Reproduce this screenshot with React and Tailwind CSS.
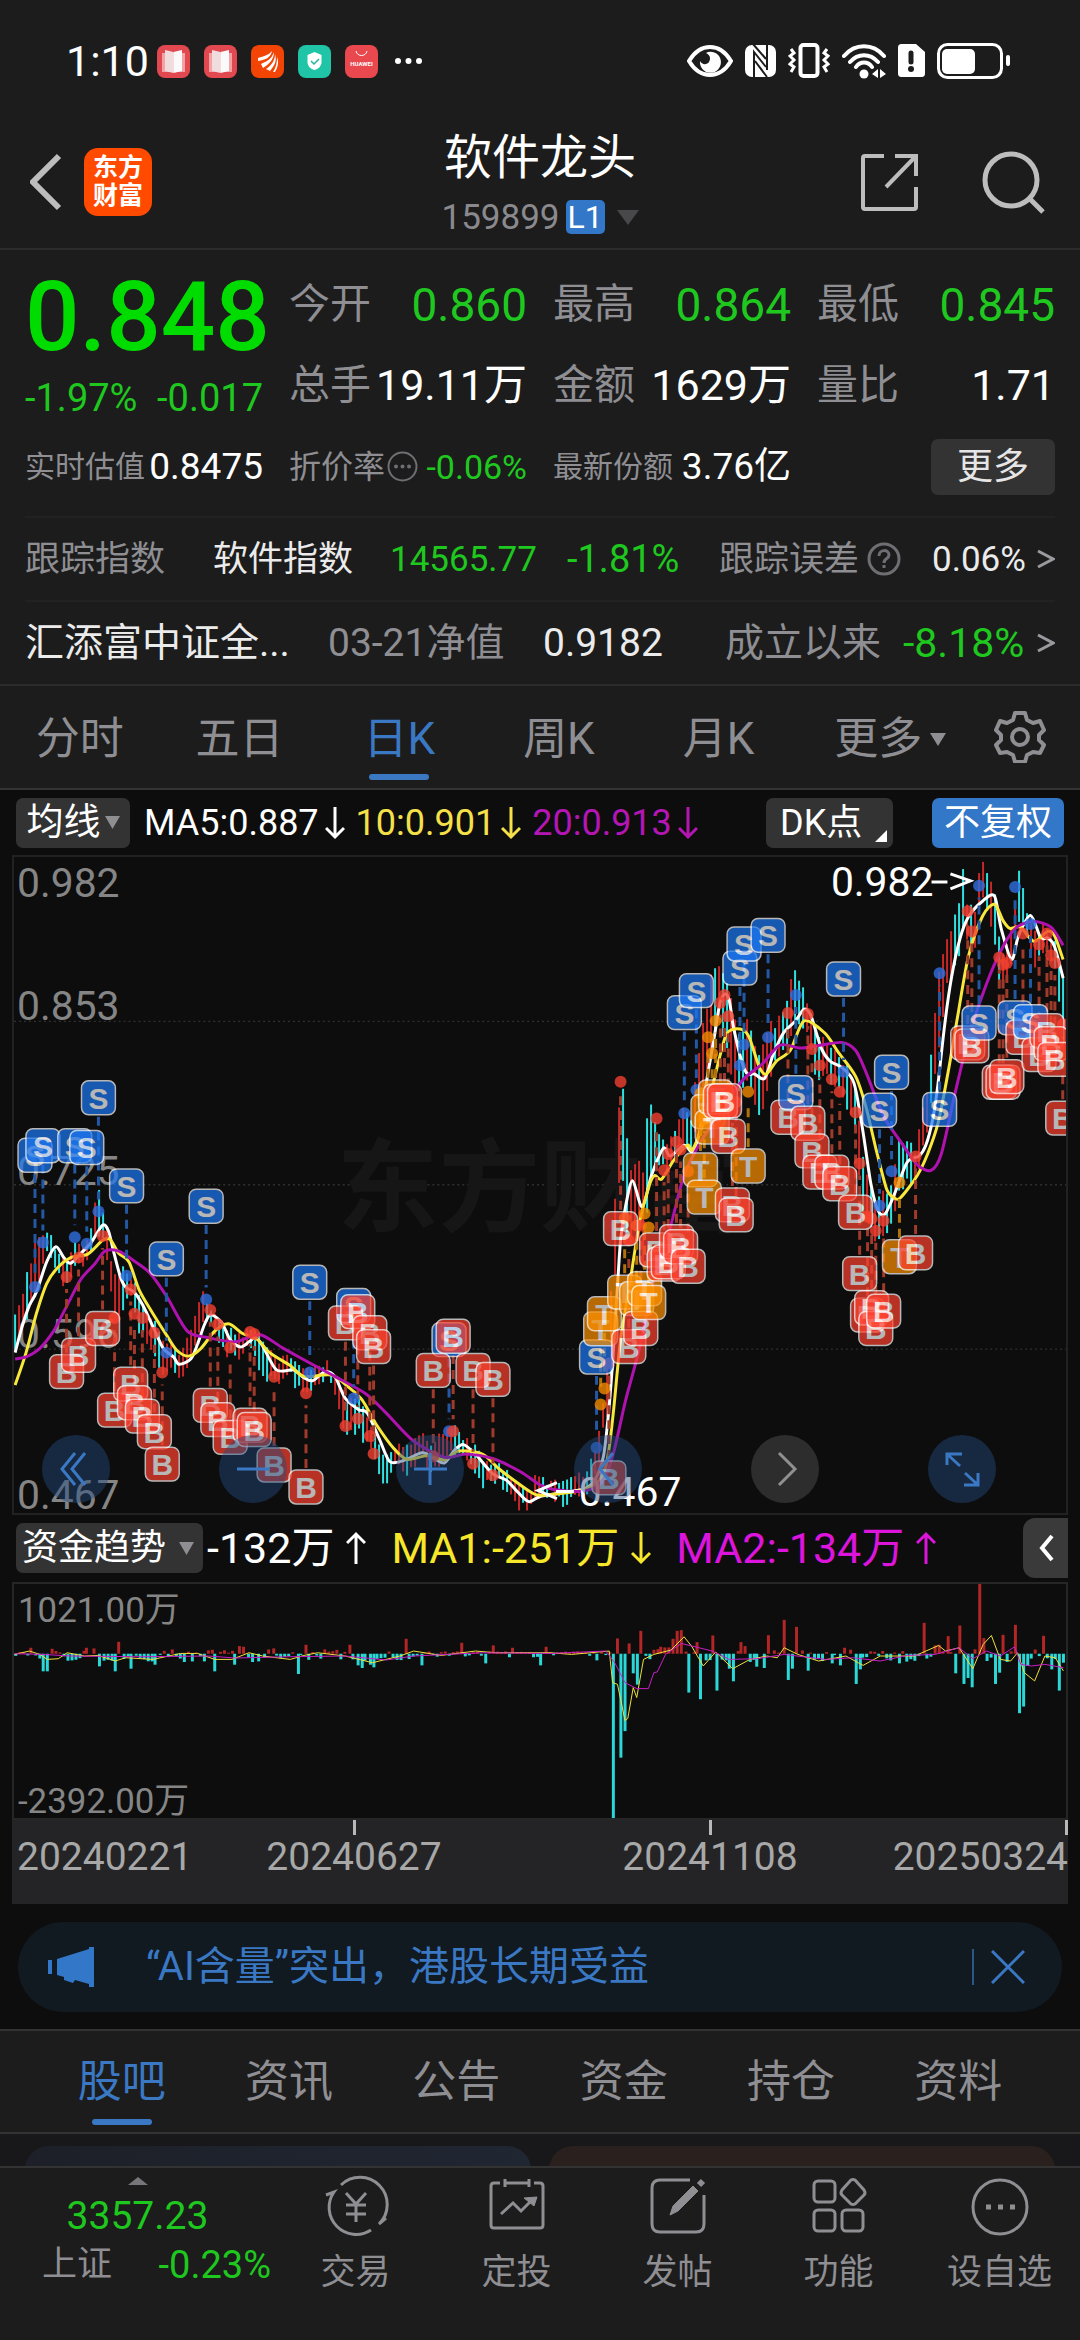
import React from "react";

/* ---------- chart data ---------- */
const UX = 2.904;
const UY = 2.306;
const HALF = 1568;
const px = (u) => u / UX - 12;
const py = (v) => v / UY - 5.5;

const pairs = (left, right) => {
  const out = [];
  for (let i = 0; i < left.length; i += 2) out.push([px(left[i]), py(left[i + 1])]);
  for (let i = 0; i < right.length; i += 2) out.push([px(right[i] + HALF), py(right[i + 1])]);
  return out;
};

const smooth = (p) => {
  let d = `M${p[0][0].toFixed(1)} ${p[0][1].toFixed(1)}`;
  for (let i = 0; i < p.length - 1; i++) {
    const a = p[Math.max(i - 1, 0)];
    const b = p[i];
    const c = p[i + 1];
    const e = p[Math.min(i + 2, p.length - 1)];
    d += `C${(b[0] + (c[0] - a[0]) / 7).toFixed(1)} ${(b[1] + (c[1] - a[1]) / 7).toFixed(1)} ${(c[0] - (e[0] - b[0]) / 7).toFixed(1)} ${(c[1] - (e[1] - b[1]) / 7).toFixed(1)} ${c[0].toFixed(1)} ${c[1].toFixed(1)}`;
  }
  return d;
};

const ma5 = pairs(
  [38, 1160, 60, 1095, 80, 1050, 100, 1020, 130, 950, 157, 915, 180, 940, 200, 953, 230, 930, 260, 905, 293, 865, 310, 878, 325, 925, 345, 985, 360, 1008, 385, 1020, 410, 1050, 440, 1100, 470, 1150, 500, 1170, 516, 1187, 550, 1175, 570, 1140, 590, 1095, 608, 1072, 640, 1090, 665, 1130, 695, 1147, 720, 1135, 740, 1125, 760, 1145, 800, 1200, 850, 1200, 880, 1218, 905, 1225, 940, 1205, 970, 1215, 1000, 1265, 1040, 1292, 1065, 1300, 1100, 1360, 1130, 1412, 1170, 1410, 1225, 1392, 1260, 1405, 1290, 1415, 1320, 1385, 1345, 1373, 1380, 1395, 1430, 1440, 1470, 1455, 1500, 1480, 1535, 1505],
  [0, 1493, 60, 1485, 130, 1475, 160, 1455, 185, 1400, 200, 1300, 212, 1180, 225, 1020, 235, 900, 250, 820, 270, 762, 298, 823, 325, 750, 360, 687, 380, 705, 420, 680, 445, 695, 465, 650, 480, 560, 497, 480, 510, 420, 525, 350, 540, 330, 552, 345, 565, 410, 590, 490, 605, 515, 625, 515, 655, 525, 680, 470, 710, 420, 745, 392, 770, 365, 790, 380, 820, 455, 845, 485, 880, 500, 915, 535, 940, 640, 965, 770, 985, 830, 1005, 840, 1030, 800, 1070, 720, 1105, 705, 1125, 680, 1145, 620, 1160, 540, 1180, 400, 1200, 290, 1225, 200, 1250, 150, 1290, 115, 1325, 103, 1345, 180, 1375, 250, 1395, 195, 1430, 148, 1460, 200, 1480, 200, 1500, 220, 1525, 293]
);
const ma10 = pairs(
  [38, 1235, 70, 1160, 100, 1070, 130, 1000, 160, 965, 200, 940, 250, 932, 293, 900, 315, 898, 340, 930, 370, 950, 400, 1015, 440, 1070, 480, 1120, 510, 1155, 545, 1168, 580, 1150, 620, 1110, 660, 1093, 700, 1115, 745, 1130, 780, 1160, 840, 1190, 880, 1215, 960, 1212, 1010, 1240, 1050, 1270, 1090, 1325, 1140, 1380, 1180, 1407, 1240, 1398, 1290, 1408, 1330, 1388, 1400, 1395, 1450, 1430, 1500, 1460, 1540, 1482],
  [0, 1490, 100, 1482, 150, 1470, 185, 1440, 200, 1390, 215, 1290, 235, 1130, 260, 1010, 290, 860, 320, 770, 335, 750, 355, 758, 390, 715, 430, 680, 445, 690, 480, 620, 510, 520, 540, 430, 560, 412, 590, 412, 610, 430, 640, 500, 660, 515, 690, 485, 730, 460, 770, 392, 830, 420, 870, 465, 920, 520, 950, 590, 980, 690, 1010, 780, 1030, 800, 1050, 802, 1100, 750, 1130, 700, 1160, 630, 1190, 510, 1220, 370, 1250, 240, 1290, 150, 1325, 122, 1350, 160, 1370, 178, 1400, 175, 1440, 208, 1480, 185, 1500, 195, 1525, 250]
);
const ma20 = pairs(
  [38, 1175, 70, 1170, 110, 1150, 150, 1110, 190, 1050, 230, 990, 270, 955, 300, 925, 340, 925, 380, 945, 430, 975, 480, 1030, 540, 1110, 600, 1125, 680, 1135, 750, 1118, 820, 1150, 900, 1185, 970, 1215, 1060, 1255, 1120, 1300, 1200, 1365, 1290, 1402, 1350, 1395, 1430, 1405, 1510, 1435],
  [0, 1466, 40, 1477, 130, 1480, 185, 1455, 215, 1390, 250, 1270, 290, 1150, 330, 1000, 380, 870, 420, 750, 470, 670, 530, 600, 590, 530, 650, 490, 700, 448, 760, 455, 820, 448, 880, 442, 920, 460, 950, 510, 1000, 610, 1050, 670, 1100, 725, 1140, 738, 1170, 700, 1210, 560, 1250, 430, 1300, 310, 1350, 220, 1390, 175, 1440, 162, 1490, 175, 1525, 217]
);

// x, high, low
const rangeLeft = [38, 1065, 1160, 60, 1025, 1090, 95, 905, 1050, 130, 867, 930, 160, 920, 980, 190, 940, 1010, 210, 895, 950, 235, 920, 975, 260, 870, 920, 281, 775, 880, 300, 850, 920, 328, 985, 1080, 350, 960, 1060, 375, 975, 1030, 400, 1030, 1110, 440, 1080, 1150, 467, 1130, 1220, 490, 1140, 1180, 515, 1165, 1225, 540, 1130, 1190, 560, 1090, 1165, 583, 1020, 1100, 610, 1050, 1100, 650, 1100, 1160, 690, 1120, 1180, 725, 1100, 1140, 760, 1130, 1220, 800, 1180, 1225, 840, 1170, 1215, 885, 1200, 1270, 950, 1180, 1215, 1000, 1260, 1345, 1040, 1260, 1340, 1080, 1330, 1400, 1115, 1395, 1465, 1150, 1370, 1420, 1190, 1380, 1440, 1225, 1340, 1400, 1257, 1370, 1440, 1310, 1325, 1400, 1345, 1350, 1400, 1400, 1400, 1465, 1450, 1420, 1460, 1500, 1465, 1515, 1535, 1480, 1525, 1560, 1440, 1500];
const rangeRight = [30, 1460, 1490, 75, 1460, 1515, 130, 1440, 1490, 165, 1385, 1450, 180, 1290, 1360, 200, 1170, 1290, 212, 920, 1120, 235, 510, 680, 247, 580, 820, 260, 740, 940, 282, 710, 850, 300, 740, 960, 317, 570, 780, 328, 600, 750, 345, 650, 720, 370, 680, 740, 397, 635, 710, 420, 575, 700, 440, 630, 690, 455, 520, 650, 467, 435, 600, 480, 390, 600, 503, 270, 440, 514, 260, 400, 535, 270, 430, 550, 320, 470, 562, 350, 530, 580, 420, 560, 605, 390, 520, 630, 450, 600, 642, 480, 630, 665, 400, 550, 690, 400, 470, 722, 330, 460, 745, 270, 400, 780, 350, 420, 805, 410, 520, 850, 460, 530, 880, 480, 560, 920, 530, 640, 932, 640, 780, 945, 730, 850, 978, 800, 900, 1003, 790, 890, 1015, 800, 900, 1048, 660, 780, 1095, 690, 760, 1108, 630, 720, 1130, 550, 650, 1150, 375, 530, 1165, 260, 440, 1190, 200, 300, 1220, 120, 240, 1233, 40, 190, 1245, 110, 200, 1270, 150, 230, 1280, 50, 130, 1292, 15, 100, 1325, 95, 210, 1338, 190, 330, 1350, 230, 330, 1375, 180, 250, 1397, 40, 160, 1420, 130, 210, 1443, 190, 270, 1475, 170, 220, 1500, 210, 270, 1525, 290, 400];

const noise = (n) => {
  const s = Math.sin(n * 127.1 + 11.7) * 43758.5453;
  return s - Math.floor(s);
};

const candles = (() => {
  const keys = [];
  for (let i = 0; i < rangeLeft.length; i += 3) keys.push([rangeLeft[i], rangeLeft[i + 1], rangeLeft[i + 2]]);
  for (let i = 0; i < rangeRight.length; i += 3) keys.push([rangeRight[i] + HALF, rangeRight[i + 1], rangeRight[i + 2]]);
  const out = [];
  let k = 0;
  let n = 0;
  for (let x = 38; x <= 3093; x += 11.66, n++) {
    while (k < keys.length - 2 && x > keys[k + 1][0]) k++;
    const [x0, h0, l0] = keys[k];
    const [x1, h1, l1] = keys[k + 1];
    const t = Math.min(Math.max((x - x0) / (x1 - x0), 0), 1);
    const falling = h1 + l1 > h0 + l0;
    const hi = h0 + (h1 - h0) * t + (noise(n) - 0.4) * 22;
    const lo = l0 + (l1 - l0) * t - (noise(n + 500) - 0.4) * 26;
    out.push({
      x: px(x),
      y0: Math.max(py(hi), 1),
      y1: Math.min(py(Math.max(lo, hi + 14)), 656),
      up: noise(n + 900) > (falling ? 0.68 : 0.28),
    });
  }
  return out;
})();

// kind, x, badge y, dot y
const marksLeft = [
  ["S", 96, 703, 1008], ["S", 119, 681, 905], ["S", 212, 681, 893], ["S", 247, 685, 908], ["S", 281, 570, 833], ["S", 363, 774, 982],
  ["S", 479, 943, 1160], ["S", 595, 821, 1037], ["S", 897, 997, 1206], ["S", 1025, 1051, 1266], ["S", 1303, 1130, 1342],
  ["B", 188, 1204, 985], ["B", 223, 1166, 940], ["B", 293, 1104, 890], ["B", 328, 1293, 1080], ["B", 375, 1233, 1014], ["B", 386, 1276, 1070],
  ["B", 409, 1307, 1080], ["B", 444, 1343, 1114], ["B", 467, 1418, 1206], ["B", 607, 1282, 1061], ["B", 629, 1315, 1095], ["B", 665, 1356, 1148],
  ["B", 723, 1328, 1112], ["B", 735, 1338, 1117], ["B", 793, 1420, 1216], ["B", 886, 1471, 1254], ["B", 1001, 1091, 1330], ["B", 1037, 1065, 1313],
  ["B", 1072, 1114, 1353], ["B", 1083, 1146, 1394], ["B", 1257, 1201, 1400], ["B", 1315, 1122, 1342], ["B", 1373, 1201, 1417], ["B", 1431, 1222, 1444],
];
const marksRight = [
  ["S", 165, 1170, 1380], ["T", 177, 1105, 1280], ["T", 188, 1070, 1243], ["B", 201, 1450, 1185], ["B", 235, 873, 533], ["T", 247, 1020, 848],
  ["B", 259, 1146, 900], ["T", 282, 1035, 866], ["B", 294, 1104, 866], ["T", 305, 1012, 838], ["T", 317, 1044, 870], ["B", 340, 922, 618],
  ["B", 362, 955, 738], ["B", 374, 950, 700], ["B", 398, 903, 672], ["B", 410, 915, 690], ["B", 432, 960, 740], ["S", 421, 373, 606],
  ["S", 456, 322, 552], ["T", 468, 737, 560], ["T", 479, 800, 620], ["T", 490, 602, 430], ["T", 502, 638, 467], ["T", 512, 568, 392], ["B", 526, 578, 350],
  ["B", 538, 577, 332], ["B", 549, 659, 381], ["B", 561, 818, 600], ["B", 572, 841, 580], ["S", 583, 270, 495], ["S", 595, 214, 447],
  ["T", 607, 728, 556], ["S", 665, 194, 430], ["B", 723, 615, 374], ["S", 746, 558, 332], ["B", 781, 629, 376], ["B", 793, 693, 457],
  ["B", 816, 742, 495], ["B", 851, 742, 527], ["B", 874, 769, 556], ["S", 885, 295, 510], ["B", 920, 835, 604], ["B", 932, 977, 722],
  ["B", 955, 1073, 845], ["B", 967, 1056, 850], ["B", 979, 1104, 878], ["S", 990, 599, 820], ["B", 1002, 1064, 855], ["S", 1025, 511, 740],
  ["T", 1048, 938, 766], ["B", 1095, 929, 706], ["S", 1165, 597, 282], ["B", 1247, 443, 138], ["B", 1259, 450, 185], ["S", 1280, 397, 79],
  ["B", 1339, 534, 245], ["B", 1350, 534, 262], ["B", 1361, 521, 258], ["S", 1385, 385, 82], ["B", 1408, 430, 190], ["S", 1430, 394, 168],
  ["B", 1455, 470, 215], ["B", 1478, 415, 190], ["B", 1490, 445, 240], ["B", 1501, 481, 258], ["B", 1524, 617, 400],
];
const marks = [...marksLeft, ...marksRight.map(([k, x, y, d]) => [k, x + HALF, y, d])].map(([kind, x, y, dot]) => ({
  kind,
  x: px(x),
  y: py(y),
  dot: py(dot),
}));

const badgeFill = { S: "#1c78f5", B: "#ff4230", T: "#ff9100" };
const dotFill = { S: "#2e6fe0", B: "#f04030", T: "#f08a00" };
const dashFill = { S: "#2358a4", B: "#a03a2a", T: "#b0720a" };

/* ---------- fund-flow data ---------- */
const fx = (u) => u / 1.452 - 12;
const fy = (v) => v / 3 - 71;
const ZERO = fy(423);
const bigFlows = [42, 405, 73, 408, 123, 405, 134, 407, 170, 387, 346, 400, 352, 402, 396, 407, 443, 396, 507, 396, 589, 378, 670, 390, 716, 398, 744, 405, 793, 402, 897, 377, 914, 392, 931, 354, 960, 402, 966, 404, 972, 404, 978, 378, 984, 354, 990, 352, 1013, 388, 1036, 368, 1077, 388, 1083, 400, 1117, 367, 1140, 321, 1158, 342, 1228, 405, 1344, 330, 1360, 398, 1366, 396, 1379, 370, 1396, 338, 1425, 212, 1431, 376, 1459, 366, 1477, 336, 1518, 369, 60, 476, 66, 476, 102, 443, 142, 461, 165, 476, 188, 468, 223, 456, 310, 476, 339, 456, 374, 446, 432, 484, 519, 458, 525, 466, 537, 456, 542, 464, 612, 458, 705, 452, 785, 458, 867, 443, 891, 918, 902, 736, 908, 656, 920, 482, 926, 516, 1001, 540, 1018, 560, 1042, 534, 1060, 468, 1066, 506, 1100, 462, 1111, 466, 1146, 502, 1152, 468, 1175, 474, 1210, 452, 1222, 458, 1245, 514, 1251, 470, 1308, 452, 1390, 482, 1402, 514, 1408, 496, 1414, 524, 1448, 514, 1454, 480, 1483, 602, 1489, 582, 1495, 460, 1530, 470, 1541, 534, 1547, 450];
const flows = (() => {
  const out = [];
  for (let i = 0; i < bigFlows.length; i += 2) out.push([fx(bigFlows[i]), fy(bigFlows[i + 1])]);
  let n = 0;
  for (let x = 20; x < 1548; x += 5.85, n++) {
    if (bigFlows.some((v, i) => i % 2 === 0 && Math.abs(v - x) < 3)) continue;
    const quiet = (x > 620 && x < 885) || x < 50;
    const amp = quiet ? 8 : 22;
    const up = noise(n + 40) > (quiet ? 0.35 : 0.62);
    out.push([fx(x), fy(423 + (up ? -1 : 1) * (3 + noise(n + 70) * (up ? amp / 2 : amp)))]);
  }
  return out;
})();
const flowLine = (a) => {
  let d = "";
  for (let i = 0; i < a.length; i += 2) d += `${i ? "L" : "M"}${fx(a[i]).toFixed(1)} ${fy(a[i + 1]).toFixed(1)}`;
  return d;
};
const flowMa1 = [18, 425, 40, 415, 55, 425, 66, 440, 82, 438, 95, 420, 120, 430, 140, 428, 165, 445, 180, 435, 220, 440, 260, 422, 285, 422, 310, 440, 335, 440, 360, 420, 380, 430, 420, 440, 440, 428, 460, 420, 500, 430, 540, 450, 580, 430, 600, 415, 640, 428, 690, 415, 720, 420, 800, 420, 830, 425, 885, 415, 890, 510, 897, 515, 908, 624, 912, 618, 920, 525, 925, 555, 935, 440, 950, 425, 975, 412, 994, 372, 1005, 400, 1022, 460, 1040, 418, 1065, 468, 1090, 440, 1115, 430, 1130, 435, 1140, 405, 1160, 425, 1190, 445, 1230, 430, 1255, 458, 1280, 430, 1330, 430, 1365, 398, 1375, 415, 1395, 405, 1415, 468, 1430, 395, 1442, 368, 1455, 440, 1470, 445, 1480, 420, 1490, 480, 1505, 505, 1520, 430, 1535, 435, 1547, 475];
const flowMa2 = [18, 423, 60, 425, 100, 430, 200, 432, 300, 430, 340, 436, 420, 432, 500, 430, 560, 442, 600, 430, 700, 420, 800, 422, 880, 415, 893, 450, 908, 510, 925, 528, 942, 528, 950, 480, 955, 478, 967, 425, 990, 392, 1010, 402, 1035, 415, 1060, 440, 1100, 438, 1140, 425, 1200, 440, 1240, 435, 1280, 445, 1320, 428, 1360, 425, 1395, 405, 1415, 438, 1435, 415, 1455, 430, 1476, 402, 1485, 455, 1500, 460, 1520, 455, 1547, 465];

/* ---------- small drawings ---------- */
const Arrow = ({ up }) => (
  <svg className="h-[34px] w-[20px] shrink-0" viewBox="0 0 20 34" fill="none" stroke="currentColor" strokeWidth="3">
    {up ? <path d="M10 33V3M1 12l9-9 9 9" /> : <path d="M10 1v30M1 22l9 9 9-9" />}
  </svg>
);
const Caret = ({ className }) => (
  <svg className={className} viewBox="0 0 16 13" fill="currentColor" preserveAspectRatio="none">
    <path d="M0 0h16L8 13z" />
  </svg>
);

function StatusBar() {
  const book = (
    <svg className="size-[33px]" viewBox="0 0 33 33">
      <rect width="33" height="33" rx="8" fill="#e2484f" />
      <path d="M5 8h23v19H5z" fill="#f3a3a6" />
      <path d="M8 5l8.500 2v21L8 26z" fill="#f0dcdc" />
      <path d="M25 5l-8.500 2v21l8.500-2z" fill="#fafafa" />
    </svg>
  );
  return (
    <div className="flex h-[122px] items-center justify-between pl-[66px] pr-[70px]">
      <div className="flex items-center gap-[14px]">
        <span className="w-[77px] text-[43px] leading-none text-white">1:10</span>
        {book}
        {book}
        <svg className="size-[33px]" viewBox="0 0 33 33">
          <rect width="33" height="33" rx="8" fill="#f24405" />
          <path d="M7 13c6-2 11-3 14-7-1 6-6 9-14 10zM10 19c7-3 11-6 13-12 0 8-5 12-11 16zM15 24c6-4 9-9 9-15 2 7 0 11-5 17zM22 27c3-5 4-9 4-15 2 5 1 10-2 15z" fill="#fff" />
        </svg>
        <svg className="size-[33px]" viewBox="0 0 33 33">
          <rect width="33" height="33" rx="8" fill="#20c4a6" />
          <path d="M16.500 7l7 3v7c0 4-3 7-7 8-4-1-7-4-7-8v-7z" fill="#fff" />
          <path d="M13 16l3 3 5-5" fill="none" stroke="#20b79b" strokeWidth="1.500" />
        </svg>
        <svg className="size-[33px]" viewBox="0 0 33 33">
          <rect width="33" height="33" rx="8" fill="#e8484e" />
          <path d="M11 6c1 6 10 6 11 0" fill="none" stroke="#fff" />
          <text x="16.500" y="21" textAnchor="middle" fontSize="6" fontWeight="700" fill="#fff">HUAWEI</text>
        </svg>
        <svg className="ml-[3px] h-[6px] w-[27px]" viewBox="0 0 27 6" fill="#fff">
          <circle cx="3" cy="3" r="3" />
          <circle cx="13.500" cy="3" r="3" />
          <circle cx="24" cy="3" r="3" />
        </svg>
      </div>
      <div className="flex items-center gap-[12px]">
        <svg className="h-[36px] w-[46px]" viewBox="0 0 46 36">
          <path d="M2 18C8 8 15 4 23 4s15 4 21 14c-6 10-13 14-21 14S8 28 2 18z" fill="none" stroke="#fff" strokeWidth="4" />
          <path d="M21 9a10.500 10.500 0 1 1-8 9c2 4 7 4 9 1 2-4 1-7-3-9z" fill="#fff" />
        </svg>
        <svg className="h-[36px] w-[31px]" viewBox="0 0 31 36">
          <rect y="2" width="31" height="32" rx="7" fill="#fff" />
          <path d="M9 35V9l12 15M10 17v0M22 1v26M10 18l12 16M8 1l13 15" stroke="#1c1c1c" strokeWidth="2" fill="none" />
        </svg>
        <svg className="h-[36px] w-[42px]" viewBox="0 0 42 36" fill="none" stroke="#fff" strokeWidth="3">
          <rect x="12.500" y="2" width="17" height="31" rx="3" strokeWidth="4" />
          <path d="M3 6l3 4-4 3 4 4-4 4 4 3-3 5M39 6l-3 4 4 3-4 4 4 4-4 3 3 5" />
        </svg>
        <svg className="h-[36px] w-[44px]" viewBox="0 0 44 36" fill="none" stroke="#fff" strokeWidth="4">
          <path d="M2 13c11-13 29-13 40 0M8 19c8-9 20-9 28 0M14 24c4-6 12-6 16 0" strokeLinecap="round" />
          <circle cx="22" cy="31" r="4.500" fill="#fff" stroke="none" />
          <path d="M36 26v9l-6-4zM38 26v9l6-4z" fill="#fff" stroke="none" />
        </svg>
        <svg className="h-[36px] w-[27px]" viewBox="0 0 27 36">
          <path d="M4 1h14l9 8v21c0 3-1 4-4 4H4c-3 0-4-1-4-4V5c0-3 1-4 4-4z" fill="#fff" />
          <path d="M13 10v9" stroke="#1c1c1c" strokeWidth="5" strokeLinecap="round" />
          <circle cx="13" cy="26" r="3" fill="#1c1c1c" />
        </svg>
        <svg className="h-[36px] w-[73px]" viewBox="0 0 73 36">
          <rect x="1.500" y="1.500" width="63" height="33" rx="9" fill="none" stroke="#fff" strokeWidth="3" />
          <rect x="5" y="6" width="33" height="25" rx="5" fill="#fff" />
          <rect x="69" y="12" width="4" height="11" rx="2" fill="#fff" />
        </svg>
      </div>
    </div>
  );
}

function Header() {
  return (
    <header className="grid h-[128px] grid-cols-[1fr_auto_1fr] items-center border-b-2 border-[#2c2c2c] px-[30px]">
      <div className="flex items-center gap-[22px] pb-[6px]">
        <button type="button" aria-label="返回">
          <svg className="h-[58px] w-[32px]" viewBox="0 0 32 58" fill="none" stroke="#bdbdbd" strokeWidth="6">
            <path d="M29 3L3 29l26 26" />
          </svg>
        </button>
        <div className="flex size-[68px] flex-col items-center justify-center rounded-[14px] bg-[#ff4a00] text-[25px] font-bold leading-[28px] text-white">
          <span>东方</span>
          <span>财富</span>
        </div>
      </div>
      <div className="flex flex-col items-center">
        <h1 className="text-[48px] leading-[64px] text-white">软件龙头</h1>
        <div className="flex h-[54px] items-center text-[35px] leading-none text-[#8a8a8e]">
          <span>159899</span>
          <span className="ml-[6px] flex h-[34px] w-[39px] items-center justify-center rounded-[5px] bg-[#3277c8] text-[32px] text-white">L1</span>
          <Caret className="ml-[12px] h-[15px] w-[22px] text-[#48484a]" />
        </div>
      </div>
      <div className="flex items-center justify-end gap-[62px] pb-[6px] pr-[4px]">
        <button type="button" aria-label="分享">
          <svg className="size-[59px]" viewBox="0 0 59 59" fill="none" stroke="#bdbdbd" strokeWidth="4">
            <path d="M24 3H5q-2 0-2 2v49q0 2 2 2h49q2 0 2-2V34M35 3h21v20M56 3L26 34" />
          </svg>
        </button>
        <button type="button" aria-label="搜索">
          <svg className="size-[65px]" viewBox="0 0 65 65" fill="none" stroke="#bdbdbd" strokeWidth="5">
            <circle cx="30" cy="30" r="26" />
            <path d="M48 48l14 14" />
          </svg>
        </button>
      </div>
    </header>
  );
}

const Stat = ({ label, value, green }) => (
  <div className="flex h-[81px] items-center justify-between text-[41px] leading-none">
    <span className="text-[#8e8e93]">{label}</span>
    <span className={green ? "text-[46px] text-[#1fc81f]" : "text-[43px] text-white"}>{value}</span>
  </div>
);

function Quote() {
  return (
    <section className="border-b-2 border-[#2c2c2c] px-[25px] pt-[14px] whitespace-nowrap leading-none">
      <div className="grid grid-cols-4 gap-x-[26px]">
        <div className="row-span-2">
          <div className="flex h-[106px] items-center text-[96px] font-medium text-[#00dc00]">0.848</div>
          <div className="flex h-[56px] items-center justify-between text-[38px] text-[#1fc81f]">
            <span>-1.97%</span>
            <span>-0.017</span>
          </div>
        </div>
        <Stat label="今开" value="0.860" green />
        <Stat label="最高" value="0.864" green />
        <Stat label="最低" value="0.845" green />
        <Stat label="总手" value="19.11万" />
        <Stat label="金额" value="1629万" />
        <Stat label="量比" value="1.71" />
        <div className="flex h-[81px] items-center justify-between text-[30px] text-[#8e8e93]">
          实时估值<span className="text-[37px] text-white">0.8475</span>
        </div>
        <div className="flex h-[81px] items-center justify-between text-[32px] text-[#8e8e93]">
          <span className="flex items-center gap-[2px]">
            折价率
            <svg className="size-[31px]" viewBox="0 0 31 31" fill="#6e6e73">
              <circle cx="15.500" cy="15.500" r="14" fill="none" stroke="#6e6e73" strokeWidth="2" />
              <circle cx="9" cy="15.500" r="2" />
              <circle cx="15.500" cy="15.500" r="2" />
              <circle cx="22" cy="15.500" r="2" />
            </svg>
          </span>
          <span className="text-[34px] text-[#1fc81f]">-0.06%</span>
        </div>
        <div className="flex h-[81px] items-center justify-between text-[30px] text-[#8e8e93]">
          最新份额<span className="text-[37px] text-white">3.76亿</span>
        </div>
        <div className="flex h-[81px] items-center justify-end">
          <button type="button" className="h-[56px] w-[124px] rounded-[7px] bg-[#333] text-[36px] text-[#e6e6e6]">更多</button>
        </div>
      </div>
      <div className="mt-[9px] grid h-[84px] grid-cols-[188fr_177fr_177fr_152fr_213fr_95fr_28fr] items-center border-t-2 border-[#222] text-[35px] text-[#8e8e93]">
        <span>跟踪指数</span>
        <span className="text-[#ebebeb]">软件指数</span>
        <span className="text-[#1fc81f]">14565.77</span>
        <span className="text-[38px] text-[#1fc81f]">-1.81%</span>
        <span className="flex items-center gap-[8px]">
          跟踪误差
          <svg className="size-[34px]" viewBox="0 0 34 34" fill="none" stroke="#6e6e73" strokeWidth="3">
            <circle cx="17" cy="17" r="15" />
            <path d="M12 14c0-7 10-7 10-1 0 4-5 3-5 8M17 23v3" />
          </svg>
        </span>
        <span className="text-[#ebebeb]">0.06%</span>
        <Chevron />
      </div>
      <div className="grid h-[84px] grid-cols-[303fr_215fr_182fr_178fr_124fr_28fr] items-center border-t-2 border-[#222] text-[39px] text-[#8e8e93]">
        <span className="text-[#ebebeb]">汇添富中证全...</span>
        <span>03-21净值</span>
        <span className="text-[#ebebeb]">0.9182</span>
        <span>成立以来</span>
        <span className="text-[41px] text-[#1fc81f]">-8.18%</span>
        <Chevron />
      </div>
    </section>
  );
}

const Chevron = () => (
  <svg className="h-[20px] w-[18px] justify-self-end" viewBox="0 0 18 20" fill="none" stroke="#9a9a9e" strokeWidth="3">
    <path d="M1 2l15 8-15 8" />
  </svg>
);

function PeriodTabs() {
  return (
    <nav className="grid h-[104px] grid-cols-[repeat(5,160fr)_184fr_76fr] items-stretch border-b-2 border-[#333] pr-[22px] text-[44px] leading-none text-[#8e8e93]">
      {["分时", "五日", "日K", "周K", "月K"].map((t) => (
        <button key={t} type="button" className={t === "日K" ? "relative pt-[4px] text-[#3a78c3]" : "relative pt-[4px]"}>
          {t}
          {t === "日K" && <span className="absolute bottom-[8px] left-1/2 h-[6px] w-[60px] -translate-x-1/2 rounded-full bg-[#3a78c3]" />}
        </button>
      ))}
      <button type="button" className="flex items-center justify-center gap-[8px] pt-[4px]">
        更多
        <Caret className="h-[13px] w-[16px]" />
      </button>
      <button type="button" aria-label="设置" className="flex items-center justify-center">
        <svg className="size-[52px]" viewBox="0 0 52 52" fill="none" stroke="#8e8e93" strokeWidth="4" strokeLinejoin="round">
          <path d="M21 2h10l2 7 6 3 7-2 4 9-5 5v5l5 5-4 8-7-1-6 3-2 7H21l-2-7-6-3-7 1-4-8 5-5v-5l-5-5 4-9 7 2 6-3z" />
          <circle cx="26" cy="26" r="8" />
        </svg>
      </button>
    </nav>
  );
}

function MaBar() {
  return (
    <div className="flex h-[65px] items-center pl-[16px] pr-[16px] text-[36px] leading-none whitespace-nowrap">
      <button type="button" className="flex h-[50px] w-[114px] items-center justify-center gap-[4px] rounded-[7px] bg-[#333] text-[37px] text-white">
        均线
        <Caret className="h-[13px] w-[15px] text-[#8e8e93]" />
      </button>
      <div className="ml-[14px] flex gap-[11px]">
        <span className="flex items-center gap-[6px] text-white">MA5:0.887<Arrow /></span>
        <span className="flex items-center gap-[6px] text-[#f5e04a]">10:0.901<Arrow /></span>
        <span className="flex items-center gap-[6px] text-[#b416b4]">20:0.913<Arrow /></span>
      </div>
      <button type="button" className="relative ml-auto flex h-[50px] w-[127px] items-center rounded-[7px] bg-[#333] pl-[14px] text-[36px] text-white">
        DK点
        <svg className="absolute bottom-[6px] right-[6px] size-[12px]" viewBox="0 0 12 12" fill="#fff">
          <path d="M12 0v12H0z" />
        </svg>
      </button>
      <button type="button" className="ml-[39px] h-[50px] w-[132px] rounded-[7px] bg-[#3277c8] text-[36px] text-white">不复权</button>
    </div>
  );
}

const controls = [
  ["最早", <path key="a" d="M33 18L20 34l13 16M43 18L30 34l13 16" />],
  ["缩小", <path key="b" d="M18 34h33" />],
  ["放大", <path key="c" d="M18 34h33M34 18v32" />],
  ["左移", <path key="d" d="M39 18L26 34l13 16" />],
  ["右移", <path key="e" d="M28 18l16 16-16 16" />],
  ["全屏", <path key="f" d="M19 30V19h15M19 19l13 12M50 38v12H36M50 50L37 38" />],
];

function KChart() {
  return (
    <div className="relative mx-[12px] border-2 border-[#222]">
      <svg className="block h-auto w-full" viewBox="0 0 1056 658">
        <g stroke="#303030" strokeWidth="1.500" strokeDasharray="2 3">
          <path d="M0 165h1056M0 329h1056M0 494h1056" />
        </g>
        <text x="528" y="368" textAnchor="middle" fontSize="102" fontWeight="700" fill="#161616">东方财富</text>
        <g fontSize="41" fill="#858585">
          <text x="3" y="40">0.982</text>
          <text x="3" y="164">0.853</text>
          <text x="3" y="329">0.725</text>
          <text x="3" y="493">0.596</text>
          <text x="3" y="654">0.467</text>
        </g>
        {candles.map((c, i) => (
          <rect key={i} x={c.x - 1} y={c.y0} width="2" height={c.y1 - c.y0} fill={c.up ? "#c62828" : "#2ee0e0"} />
        ))}
        <g fill="none" strokeWidth="3">
          <path d={smooth(ma5)} stroke="#fff" />
          <path d={smooth(ma10)} stroke="#f8e83c" />
          <path d={smooth(ma20)} stroke="#b012b0" />
        </g>
        <g fontSize="41" fill="#fff">
          <text x="820" y="39">0.982</text>
          <path d="M921 25h16M940 17l20 7-20 8" fill="none" stroke="#fff" strokeWidth="3" />
          <text x="567" y="651">0.467</text>
          <path d="M562 637h-18M545 628l-19 8 19 8" fill="none" stroke="#fff" strokeWidth="3" />
        </g>
        {marks.map((m, i) => {
          const dir = m.dot > m.y ? 1 : -1;
          return (
            <path key={i} d={`M${m.x} ${m.y + dir * 19}V${m.dot - dir * 12}`} stroke={dashFill[m.kind]} strokeWidth="3" strokeDasharray="9 6" />
          );
        })}
        {marks.map((m, i) => (
          <circle key={i} cx={m.x} cy={m.dot} r="6" fill={dotFill[m.kind]} opacity="0.8" />
        ))}
        {marks.map((m, i) => (
          <g key={i} opacity="0.7">
            <rect x={m.x - 17} y={m.y - 17} width="34" height="34" rx="7" fill={badgeFill[m.kind]} stroke="#fff" strokeWidth="1.500" />
            <text x={m.x} y={m.y + 11} textAnchor="middle" fontFamily="Liberation Sans, sans-serif" fontWeight="700" fontSize="30" fill="#fff">
              {m.kind}
            </text>
          </g>
        ))}
      </svg>
      <div className="absolute bottom-[10px] left-[28px] right-[70px] flex justify-between">
        {controls.map(([name, shape]) => (
          <button key={name} type="button" aria-label={name} className={name === "右移" ? "size-[68px] rounded-full bg-[#2d2d2d]" : "size-[68px] rounded-full bg-[#244c80]/45"}>
            <svg viewBox="0 0 68 68" fill="none" stroke={name === "右移" ? "#909090" : "#3a78c3"} strokeWidth="3">
              {shape}
            </svg>
          </button>
        ))}
      </div>
    </div>
  );
}

function FlowPanel() {
  return (
    <div>
      <div className="ml-[16px] mr-[12px] flex h-[67px] items-center text-[43px] leading-none whitespace-nowrap">
        <button type="button" className="flex h-[50px] w-[187px] items-center justify-between rounded-[7px] bg-[#333] pl-[6px] pr-[9px] text-[36px] text-white">
          资金趋势
          <Caret className="h-[13px] w-[15px] text-[#8e8e93]" />
        </button>
        <div className="ml-[4px] flex gap-[25px]">
          <span className="flex items-center gap-[12px] text-white">-132万<Arrow up /></span>
          <span className="flex items-center gap-[12px] text-[#f7e72a]">MA1:-251万<Arrow /></span>
          <span className="flex items-center gap-[12px] text-[#dc14dc]">MA2:-134万<Arrow up /></span>
        </div>
        <button type="button" aria-label="展开" className="ml-auto flex h-[60px] w-[45px] items-center justify-center rounded-l-[12px] bg-[#3a3a3a]">
          <svg className="h-[28px] w-[16px]" viewBox="0 0 16 28" fill="none" stroke="#fff" strokeWidth="4">
            <path d="M14 2L4 14l10 12" />
          </svg>
        </button>
      </div>
      <div className="mx-[12px] border-2 border-[#262626]">
        <svg className="block h-auto w-full" viewBox="0 0 1056 235">
          <g fontSize="35" fill="#858585">
            <text x="4" y="38">1021.00万</text>
            <text x="4" y="230">-2392.00万</text>
          </g>
          {flows.map(([x, y], i) => (
            <rect key={i} x={x - 1.5} y={Math.min(y, ZERO)} width="3" height={Math.abs(y - ZERO)} fill={y < ZERO ? "#b22626" : "#2ad8d8"} />
          ))}
          <path d={flowLine(flowMa1)} fill="none" stroke="#f0e03c" />
          <path d={flowLine(flowMa2)} fill="none" stroke="#c81ec8" />
        </svg>
      </div>
      <div className="mx-[12px] grid h-[84px] grid-cols-[164fr_356fr_356fr_180fr] bg-[#242426] text-[39px] leading-none text-[#a8a8a8]">
        <DateMark label="20240221" className="items-start pl-[5px]" />
        <DateMark label="20240627" className="items-center" tick />
        <DateMark label="20241108" className="items-center" tick />
        <DateMark label="20250324" className="items-end" tick />
      </div>
    </div>
  );
}

const DateMark = ({ label, className, tick }) => (
  <div className={`flex min-w-0 flex-col gap-[3px] ${className}`}>
    <span className={tick ? "h-[15px] w-[3px] bg-[#b8b8b8]" : "h-[15px] w-[3px]"} />
    <span>{label}</span>
  </div>
);

function Banner() {
  return (
    <div className="mx-[18px] mt-[18px] flex h-[90px] items-center rounded-full bg-[#111921] pl-[30px] pr-[37px] text-[40px] leading-none text-[#3a78c3]">
      <svg className="h-[40px] w-[46px]" viewBox="0 0 46 40" fill="#3277c8">
        <path d="M0 13h4v14H0zM9 12L41 2V0h5v40h-5v-3l-14-4-2 3-9-3v-3l-7-2z" />
      </svg>
      <a href="#notice" className="ml-[52px] flex-1">“AI含量”突出，港股长期受益</a>
      <span className="mr-[17px] h-[36px] w-[2px] bg-[#2a5688]" />
      <button type="button" aria-label="关闭">
        <svg className="size-[34px]" viewBox="0 0 34 34" fill="none" stroke="#3a78c3" strokeWidth="3">
          <path d="M1 1l32 32M33 1L1 33" />
        </svg>
      </button>
    </div>
  );
}

function InfoTabs() {
  return (
    <nav className="mt-[17px] grid h-[105px] grid-cols-6 border-y-2 border-[#333] bg-[#1c1c1c] px-[38px] text-[44px] leading-none text-[#8e8e93]">
      {["股吧", "资讯", "公告", "资金", "持仓", "资料"].map((t, i) => (
        <button key={t} type="button" className={i === 0 ? "relative pt-[2px] text-[#3a78c3]" : "relative pt-[2px]"}>
          {t}
          {i === 0 && <span className="absolute bottom-[7px] left-1/2 h-[6px] w-[60px] -translate-x-1/2 rounded-full bg-[#3a78c3]" />}
        </button>
      ))}
    </nav>
  );
}

const actions = [
  ["交易", (
    <g key="t">
      <path d="M15 8A27 27 0 0 1 53 47l7-6M45 53A27 27 0 0 1 8 15l-8 3" />
      <path d="M20 16l10 11 10-11M20 28h20M20 37h20M30 27v18" />
    </g>
  )],
  ["定投", (
    <g key="d">
      <path d="M13 6H7q-3 0-3 3v39q0 3 3 3h46q3 0 3-3V9q0-3-3-3h-6M18 2v8M42 2v8M18 6h24" />
      <path d="M14 37l12-11 8 8 10-10" />
      <path d="M50 20L37 21l10 8z" fill="#8e8e93" strokeWidth="1" />
    </g>
  )],
  ["发帖", (
    <g key="f">
      <path d="M42 3H12q-8 0-8 8v36q0 8 8 8h36q8 0 8-8V18" />
      <path d="M22 38l3-9 20-20 5 5-20 20z" fill="#8e8e93" strokeWidth="1" />
      <path d="M51 8l4-4" strokeWidth="6" />
    </g>
  )],
  ["功能", (
    <g key="g">
      <rect x="5" y="4" width="21" height="21" rx="4" />
      <rect x="5" y="33" width="21" height="21" rx="4" />
      <rect x="33" y="33" width="21" height="21" rx="4" />
      <path d="M42 3q2-1 4 0l9 10q2 3 0 5l-9 9q-2 1-4 0l-9-9q-2-2 0-5z" />
    </g>
  )],
  ["设自选", (
    <g key="s">
      <circle cx="30" cy="30" r="27" />
      <path d="M16 30h5M28 30h5M40 30h5" strokeWidth="5" />
    </g>
  )],
];

function BottomBar() {
  return (
    <footer className="flex flex-1 border-t-2 border-[#333] bg-[#1c1c1c] leading-none whitespace-nowrap">
      <button type="button" className="flex flex-[275] flex-col items-center self-start pt-[9px]">
        <Caret className="h-[8px] w-[20px] rotate-180 text-[#77777b]" />
        <span className="mt-[12px] text-[39px] text-[#1fc81f]">3357.23</span>
        <span className="mt-[10px] flex w-full items-center justify-between pl-[42px] pr-[4px] text-[35px] text-[#8e8e93]">
          上证<span className="text-[38px] text-[#1fc81f]">-0.23%</span>
        </span>
      </button>
      {actions.map(([name, shape]) => (
        <button key={name} type="button" className="flex flex-[161] flex-col items-center self-start pt-[9px] text-[35px] text-[#8e8e93]">
          <svg className="h-[60px] w-[60px] overflow-visible" viewBox="0 0 60 60" fill="none" stroke="#8e8e93" strokeWidth="3">
            {shape}
          </svg>
          <span className="mt-[18px]">{name}</span>
        </button>
      ))}
    </footer>
  );
}

export default function App() {
  return (
    <main className="flex min-h-screen flex-col bg-[#1c1c1c] font-['Roboto','Noto_Sans_CJK_SC',sans-serif]">
      <StatusBar />
      <Header />
      <Quote />
      <PeriodTabs />
      <div className="bg-[#0d0d0d]">
        <MaBar />
        <KChart />
        <FlowPanel />
        <Banner />
        <InfoTabs />
        <div className="grid h-[32px] grid-cols-2 gap-[18px] overflow-hidden bg-[#18181a] px-[25px] pt-[12px]">
          <div className="h-[80px] rounded-[24px] bg-gradient-to-r from-[#1d2028] to-[#202632]" />
          <div className="h-[80px] rounded-[24px] bg-[#2a201e]" />
        </div>
      </div>
      <BottomBar />
    </main>
  );
}
